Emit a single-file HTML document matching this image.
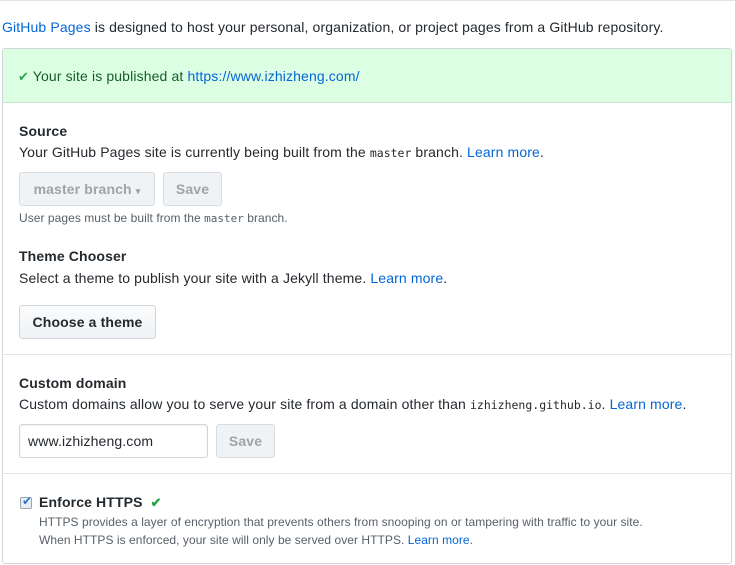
<!DOCTYPE html><html><head><style>
body{margin:0;width:735px;height:565px;background:#fff;font-family:"Liberation Sans",sans-serif;font-size:14px;color:#24292e;position:relative;overflow:hidden;letter-spacing:0.13px}
a{color:#0366d6;text-decoration:none}
.abs{position:absolute;white-space:nowrap}
code{font-family:"DejaVu Sans Mono","Liberation Mono",monospace;font-size:11.5px;letter-spacing:0}
.btn{position:absolute;border:1px solid #d1d5da;border-radius:3px;background:#eff3f6;font-weight:bold;font-size:14px;box-sizing:border-box;text-align:center}
.dis{color:#9fa4a9;background:#eff3f6;border-color:#d9dde1}
</style></head><body>
<div class="abs" style="left:0;top:0;width:735px;border-top:1px solid #e1e4e8"></div>
<div class="abs" style="left:2px;top:19px">
<a>GitHub Pages</a> is designed to host your personal, organization, or project pages from a GitHub repository.</div>
<div class="abs" style="left:2px;top:48px;width:728px;height:514px;border:1px solid #d1d5da;border-radius:3px"></div>
<div class="abs" style="left:3px;top:49px;width:728px;height:53px;background:#dcffe4;border-bottom:1px solid #c9e9cf"></div>
<div class="abs" style="left:18px;top:68px;color:#165c26"><span style="color:#28a745;font-size:13px">✔</span> Your site is published at <a>https://www.izhizheng.com/</a></div>
<div class="abs" style="left:19px;top:123px;font-weight:bold">Source</div>
<div class="abs" style="left:19px;top:144px">Your GitHub Pages site is currently being built from the <code>master</code> branch. <a>Learn more</a>.</div>
<div class="btn dis" style="left:19px;top:172px;width:136px;height:34px;line-height:32px">master branch <span style="font-size:9px">▾</span></div>
<div class="btn dis" style="left:163px;top:172px;width:59px;height:34px;line-height:32px">Save</div>
<div class="abs" style="left:19px;top:211px;font-size:12px;color:#586069;letter-spacing:0.05px">User pages must be built from the <code style="font-size:11px">master</code> branch.</div>
<div class="abs" style="left:19px;top:248px;font-weight:bold">Theme Chooser</div>
<div class="abs" style="left:19px;top:270px">Select a theme to publish your site with a Jekyll theme. <a>Learn more</a>.</div>
<div class="btn" style="left:19px;top:305px;width:137px;height:34px;line-height:32px;background:linear-gradient(#fafbfc,#eff3f6)">Choose a theme</div>
<div class="abs" style="left:3px;top:354px;width:728px;border-top:1px solid #e1e4e8"></div>
<div class="abs" style="left:19px;top:375px;font-weight:bold">Custom domain</div>
<div class="abs" style="left:19px;top:396px">Custom domains allow you to serve your site from a domain other than <code>izhizheng.github.io</code>. <a>Learn more</a>.</div>
<div class="abs" style="left:19px;top:424px;width:189px;height:34px;border:1px solid #d1d5da;border-radius:3px;box-sizing:border-box;line-height:32px;padding-left:8px;box-shadow:inset 0 1px 2px rgba(27,31,35,.075)">www.izhizheng.com</div>
<div class="btn dis" style="left:216px;top:424px;width:59px;height:34px;line-height:32px">Save</div>
<div class="abs" style="left:3px;top:473px;width:728px;border-top:1px solid #e1e4e8"></div>
<div class="abs" style="left:20px;top:497px;width:12px;height:12px;border:1px solid #9aa;border-radius:2px;background:#e8eef5;box-sizing:border-box"><span style="position:absolute;left:1px;top:-4px;color:#2d6fcc;font-size:12px">✔</span></div>
<div class="abs" style="left:39px;top:494px;font-weight:bold">Enforce HTTPS <span style="color:#28a745;font-size:13px;margin-left:4px">✔</span></div>
<div class="abs" style="left:39px;top:515px;font-size:12px;color:#586069;letter-spacing:0.05px">HTTPS provides a layer of encryption that prevents others from snooping on or tampering with traffic to your site.</div>
<div class="abs" style="left:39px;top:533px;font-size:12px;color:#586069;letter-spacing:0.05px">When HTTPS is enforced, your site will only be served over HTTPS. <a>Learn more</a>.</div>
</body></html>
